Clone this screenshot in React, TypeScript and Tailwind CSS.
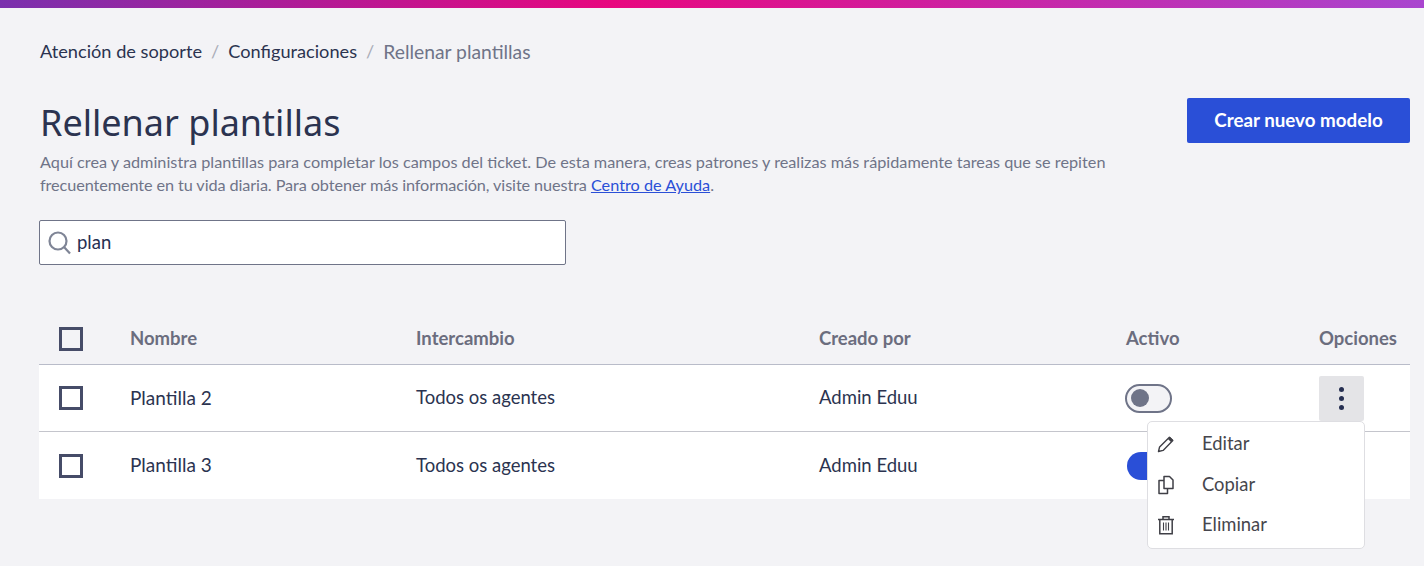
import React from "react";

const body = { fontFamily: '"Lato", "Noto Sans", sans-serif' };

const rows = [
  { name: "Plantilla 2", on: false },
  { name: "Plantilla 3", on: true },
];

const grid = "grid grid-cols-[91px_286px_403px_307px_193px_91px] items-center";

function Box() {
  return <div className="ml-5 h-6 w-6 border-[3px] border-[#464c68]" />;
}

function PencilIcon() {
  return (
    <svg width="18" height="18" viewBox="0 0 18 18" fill="none" stroke="#3f3f46" strokeWidth="1.4" strokeLinejoin="round">
      <path d="M1.500 16.500l1.100-4.600L12.400 2.200l3.400 3.400L6.100 15.400z" />
      <path d="M12 3l3 3" strokeWidth="3" />
    </svg>
  );
}

function CopyIcon() {
  return (
    <svg width="18" height="20" viewBox="0 0 18 20" fill="none" stroke="#3f3f46" strokeWidth="1.5" strokeLinejoin="round">
      <path d="M7 1.500h5.500l3.500 3.500v8.500H7z" />
      <path d="M7 5.500H2v13h8.500v-5" />
    </svg>
  );
}

function TrashIcon() {
  return (
    <svg width="18" height="20" viewBox="0 0 18 20" fill="none" stroke="#3f3f46" strokeWidth="1.5">
      <path d="M1 4.500h16M6 4.500V1.800h6v2.700M2.800 4.500V18.700h12.400V4.500" />
      <path d="M6.500 7.500v8M9 7.500v8M11.500 7.500v8" strokeWidth="1.1" />
    </svg>
  );
}

export default function App() {
  return (
    <div className="h-[566px] overflow-hidden bg-[#f3f3f6]" style={body}>
      <div className="h-2 bg-[linear-gradient(90deg,#7a30ad_0%,#e8077f_43%,#a945cf_100%)]" />
      <div className="pl-[39px] pr-[14px]">
        <nav className="mt-8 flex h-[24px] items-center gap-[9px] pl-px text-[18.2px] text-[#2b3350]">
          <span>Atención de soporte</span>
          <span className="text-[#a9acb8]">/</span>
          <span>Configuraciones</span>
          <span className="text-[#a9acb8]">/</span>
          <span className="text-[19.300px] text-[#6f7488]">Rellenar plantillas</span>
        </nav>

        <div className="mt-[34px] flex items-start justify-between">
          <div className="pl-px">
            <h1 className="mt-[3px] text-[36px] leading-[44px] text-[#2b3350]" style={{ fontFamily: '"Noto Sans", sans-serif' }}>
              Rellenar plantillas
            </h1>
            <p className="mt-[5px] w-[1090px] text-[16.250px] leading-[23px] text-[#6f7488]">
              Aquí crea y administra plantillas para completar los campos del ticket. De esta manera, creas patrones y realizas más rápidamente tareas que se repiten{" "}
              <span className="tracking-[-0.1px]">frecuentemente en tu vida diaria. Para obtener más información, visite nuestra </span>
              <a className="text-[#2a4fd7] underline">Centro de Ayuda</a>.
            </p>
          </div>
          <button className="h-[45px] w-[223px] rounded-[2px] bg-[#2a4fd7] text-[18.800px] font-bold text-white">
            Crear nuevo modelo
          </button>
        </div>

        <div className="mt-[24px] flex h-[45px] w-[527px] items-center gap-[5px] rounded-[2px] border border-[#6f7488] bg-white pl-2 text-[18.500px] text-[#262f52]">
          <svg width="24" height="24" viewBox="0 0 24 24" fill="none" stroke="#7f8596" strokeWidth="2.200">
            <circle cx="10" cy="10" r="8.500" />
            <path d="M16 16l6 6.500" />
          </svg>
          <span>plan</span>
        </div>

        <div className="relative mt-[42px]">
          <div className={`${grid} h-[58px] border-b border-[#b9bcc9] pt-[6px] text-[18.500px] font-bold text-[#6b6d7e]`}>
            <Box />
            <span>Nombre</span>
            <span>Intercambio</span>
            <span>Creado por</span>
            <span>Activo</span>
            <span>Opciones</span>
          </div>
          {rows.map((r, i) => (
            <div
              key={r.name}
              className={`${grid} h-[67px] bg-white text-[18.500px] text-[#2b3350] ${i === 0 ? "border-b border-[#c4c5cc]" : ""}`}
            >
              <Box />
              <span className="text-[19px]">{r.name}</span>
              <span>Todos os agentes</span>
              <span>Admin Eduu</span>
              {r.on ? (
                <div className="ml-px flex h-7 w-[47px] rounded-full bg-[#2a4fd7]" />
              ) : (
                <div className="-ml-px flex h-[29px] w-[47px] items-center rounded-full border-2 border-[#6f7488] bg-[#f3f3f6] pl-1">
                  <div className="h-[18px] w-[18px] rounded-full bg-[#6f7488]" />
                </div>
              )}
              {i === 0 ? (
                <div className="flex h-[45px] w-[45px] flex-col items-center justify-center gap-[4px] rounded-[2px] bg-[#e4e4e7]">
                  <i className="h-[5px] w-[5px] rounded-full bg-[#262f52]" />
                  <i className="h-[5px] w-[5px] rounded-full bg-[#262f52]" />
                  <i className="h-[5px] w-[5px] rounded-full bg-[#262f52]" />
                </div>
              ) : (
                <span />
              )}
            </div>
          ))}

          <div className="absolute left-[1108px] top-[114px] h-[128px] w-[218px] rounded-[5px] border border-[#dedee2] bg-white pl-[9px] pt-[2px] text-[18.400px] text-[#46464d]">
            <div className="flex h-[40px] items-center gap-[27px]">
              <span className="flex w-[18px] justify-center"><PencilIcon /></span>
              <span>Editar</span>
            </div>
            <div className="flex h-[41px] items-center gap-[27px]">
              <span className="flex w-[18px] justify-center"><CopyIcon /></span>
              <span>Copiar</span>
            </div>
            <div className="flex h-[40px] items-center gap-[27px]">
              <span className="flex w-[18px] justify-center"><TrashIcon /></span>
              <span>Eliminar</span>
            </div>
          </div>
        </div>
      </div>
    </div>
  );
}
